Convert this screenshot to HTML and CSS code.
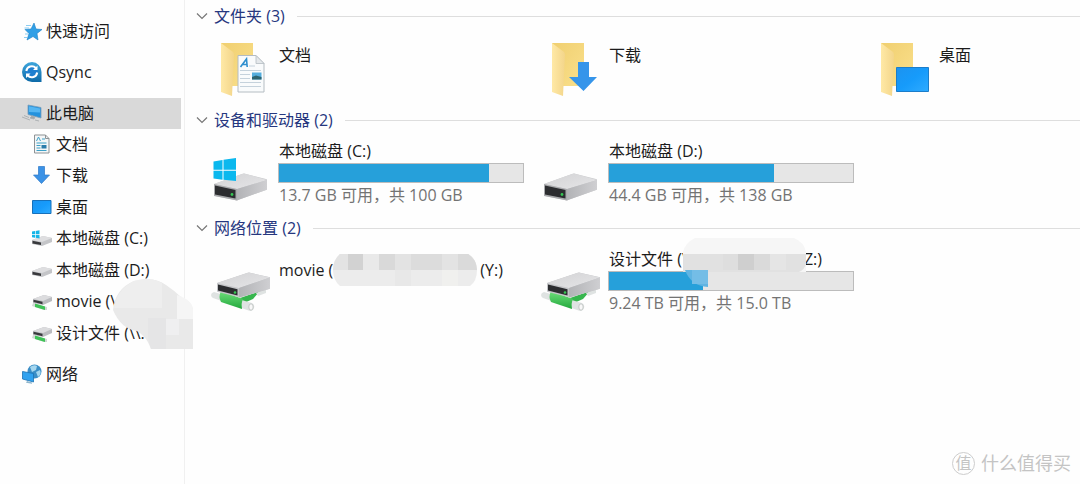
FILE: index.html
```html
<!DOCTYPE html>
<html lang="zh-CN">
<head>
<meta charset="utf-8">
<meta name="viewport" content="width=device-width, initial-scale=1">
<title>此电脑</title>
<link rel="stylesheet" href="styles.css">
</head>
<body>
<svg class="defs" aria-hidden="true">
  <defs>
    <linearGradient id="g-top" x1="0" y1="0" x2="1" y2="1"><stop offset="0" stop-color="#d2d2d4"/><stop offset="1" stop-color="#e6e6e8"/></linearGradient>
    <linearGradient id="g-side" x1="0" y1="0" x2="1" y2="0"><stop offset="0" stop-color="#b2b3b6"/><stop offset="1" stop-color="#cfcfd2"/></linearGradient>
    <linearGradient id="g-back" x1="0" y1="0" x2="1" y2="1"><stop offset="0" stop-color="#f0cf70"/><stop offset="1" stop-color="#fae08c"/></linearGradient>
    <linearGradient id="g-flap" x1="0" y1="0" x2="1" y2="0"><stop offset="0" stop-color="#ffe9a6"/><stop offset="1" stop-color="#f3d58a"/></linearGradient>
    <linearGradient id="g-screen" x1="0" y1="0" x2="1" y2="1"><stop offset="0" stop-color="#1c93f0"/><stop offset=".5" stop-color="#169bfb"/><stop offset="1" stop-color="#2fabff"/></linearGradient>
    <linearGradient id="g-green" x1="0" y1="0" x2="0" y2="1"><stop offset="0" stop-color="#6fe07c"/><stop offset="1" stop-color="#23a83c"/></linearGradient>
    <linearGradient id="g-q" x1="0" y1="0" x2="0" y2="1"><stop offset="0" stop-color="#3fa6dc"/><stop offset="1" stop-color="#0d6aa8"/></linearGradient>
    <g id="folder">
      <path d="M11 7h32v43H11z" fill="url(#g-back)"/>
      <path d="M11 7l12 9q1 1 1 3l-2 41-11-4z" fill="url(#g-flap)"/>
    </g>
    <g id="drive">
      <path d="M4 34L32 24q2-1 4 0l20 5q1 0 1 1v9q0 1-1 1L28 50q-1 1-3 0L5 46q-1 0-1-1z" fill="#c9cacc"/>
      <path d="M4 34L32 24q2-1 4 0l21 6-30 9z" fill="url(#g-top)"/>
      <path d="M27 39l30-9v9q0 1-1 1L28 50l-1 .5z" fill="url(#g-side)"/>
      <path d="M4 34l23 5v11.500L4 46z" fill="#a9aaad"/>
      <path d="M5 35.500l20.500 4.500v8.500L5 44.500z" fill="#2c2d30"/>
      <circle cx="22" cy="44.500" r="1.400" fill="#35c653"/>
    </g>
    <g id="netdrive">
      <path d="M30 42l20-7-7 8-9 4z" fill="#36b64d"/>
      <path d="M46 37l10-4v4l-8 3z" fill="#dfe3e2"/>
      <path d="M4 36l38 11q3 2 2 5-1 3-4 3L3 42q-2-1-2-3t3-3z" fill="#dfe3e2"/>
      <path d="M11 35l22 8q-2 4-1 10L11 46q-3-5 0-11z" fill="url(#g-green)"/>
      <ellipse cx="41" cy="51" rx="2.200" ry="3.200" fill="#f8f8f8" stroke="#b8bcbb" stroke-width=".8"/>
      <path d="M7 27l30-10q2-1 4 0l18 4q1 0 1 1v10q0 1-1 1L31 41q-1 1-3 0L8 36q-1 0-1-1z" fill="#c4c5c8"/>
      <path d="M7 27l30-10q2-1 4 0l19 4.500L29 32z" fill="url(#g-top)"/>
      <path d="M29 32l31-10.500V32q0 1-1 1L31 41l-2 .5z" fill="url(#g-side)"/>
      <path d="M8 28.500l19.500 4.800v6.200L8 34.500z" fill="#2c2d30"/>
      <circle cx="25" cy="36.500" r="1.300" fill="#35c653"/>
    </g>
    <g id="winlogo">
      <path d="M3.500 11.500l9-1.500v9.700h-9zM13.500 9.800L26 8v11.700H13.500zM3.500 20.700h9v9l-9-1.200zM13.500 20.700H26V31l-12.500-1.300z" fill="#0bb8ee"/>
    </g>
    <g id="s-drive">
      <path d="M0 11l11-4 9 2v4l-10 4-10-2z" fill="#c4c5c8"/>
      <path d="M0 11l11-4 9 2-10 4z" fill="#dedee0"/>
      <path d="M.5 11.700l8.500 1.800v2.500L.5 14.500z" fill="#38393c"/>
    </g>
    <g id="s-net">
      <path d="M1 12l14 4v3l-3 0L0 15z" fill="#cfd8d3"/>
      <path d="M3 12.500l10 3v3.500l-10-3z" fill="#3fc257"/>
      <path d="M1 8l11-4 8 2v4l-9 4-10-2z" fill="#bbbcc0"/>
      <path d="M1 8l11-4 8 2-9 4z" fill="#dcdcde"/>
      <path d="M1.500 8.700L10.500 10.700v2.500L1.500 11z" fill="#38393c"/>
    </g>
  </defs>
</svg>

<div class="explorer">
  <nav class="sidebar" aria-label="导航窗格">
    <ul class="nav">
      <li><a class="nav-item" href="#quick">
        <svg class="nav-icon" viewBox="0 0 20 20"><path d="M12 2l2 6 6 .5-5 4 1 6.500-5-3.500L5 19l2-6.500-4-4L9 8z" fill="#2f9fe6" stroke="#1b7fc6" stroke-width=".6"/><path d="M4 4.500h5M2.500 7H7M3 13h3M2 16.500h3" stroke="#8ccdf2" stroke-width="1"/></svg>
        快速访问</a></li>
      <li><a class="nav-item" href="#qsync">
        <svg class="nav-icon" viewBox="0 0 20 20"><path d="M10 0a9.800 9.800 0 1 0 0 20h9.500V10A10 10 0 0 0 10 0z" fill="url(#g-q)"/><circle cx="9.700" cy="9.700" r="6.300" fill="#1e7fd0"/><path d="M4.300 9a5.500 5.500 0 0 1 9.500-3M15.200 10.500a5.500 5.500 0 0 1-9.500 3" fill="none" stroke="#fff" stroke-width="2"/><path d="M15.500 3.500V8H11zM4 16v-4.500h4.500z" fill="#fff"/></svg>
        Qsync</a></li>
      <li><a class="nav-item is-selected" href="#pc" aria-current="page">
        <svg class="nav-icon" viewBox="0 0 20 20"><path d="M6 2l13 2.500V15L6 11.500z" fill="#2492dd" stroke="#7a9db8" stroke-width=".8"/><path d="M7 3.200l11 2.200v4L7 9z" fill="#55b6f2"/><path d="M10 13l3 1-1 2-4-1zM0 14l8 3M2 12.500l5 2M13 17l4 1" fill="#9fa8ad" stroke="#a8adb0" stroke-width=".9"/></svg>
        此电脑</a>
        <ul class="subnav">
          <li><a class="nav-item" href="#docs">
            <svg class="nav-icon" viewBox="0 0 20 20"><path d="M2.500 1h11l3.500 3.500V19H2.500z" fill="#f4f6f7" stroke="#8d9295"/><path d="M13.500 1v3.500H17" fill="none" stroke="#8d9295"/><path d="M4.500 7l2-4 2 4M10 5h3M4.500 9h10M4.500 11.500h4M4.500 14h4M4.500 16.500h10" fill="none" stroke="#3ba0c8"/><path d="M9.500 11h5v3.500h-5z" fill="#2b7cab"/></svg>
            文档</a></li>
          <li><a class="nav-item" href="#downloads">
            <svg class="nav-icon" viewBox="0 0 20 20"><path d="M6.500 1.500h6V10h5L9.500 18.500 1.500 10h5z" fill="#3b92e6" stroke="#2b78c8" stroke-width=".7"/></svg>
            下载</a></li>
          <li><a class="nav-item" href="#desktop">
            <svg class="nav-icon" viewBox="0 0 20 20"><path d="M.5 3.500h18.500v13H.5z" fill="url(#g-screen)" stroke="#1670ba"/></svg>
            桌面</a></li>
          <li><a class="nav-item" href="#c">
            <svg class="nav-icon" viewBox="0 0 20 20"><use href="#s-drive" y="1"/><path d="M0 3.500l3-.5v3H0zM3.700 2.900L7.500 2.300V6H3.700zM0 6.700h3v3L0 9.200zM3.700 6.700h3.800v3.700l-3.800-.6z" fill="#14b5e8"/></svg>
            本地磁盘 (C:)</a></li>
          <li><a class="nav-item" href="#d">
            <svg class="nav-icon" viewBox="0 0 20 20"><use href="#s-drive"/></svg>
            本地磁盘 (D:)</a></li>
          <li><a class="nav-item" href="#y">
            <svg class="nav-icon" viewBox="0 0 20 20"><use href="#s-net"/></svg>
            movie (\</a></li>
          <li><a class="nav-item" href="#z">
            <svg class="nav-icon" viewBox="0 0 20 20"><use href="#s-net"/></svg>
            设计文件 (\\.</a>
            <svg class="mask mask-nav" viewBox="0 0 81 70" aria-hidden="true">
              <path d="M1 31Q3 10 22 2 42-3 54 6q9 6 16 13 9 3 11 11v40H39q-4-12-14-18Q9 50 1 31z" fill="#e9e9e9"/>
              <path d="M22 2Q38-3 50 4v25H2Q5 10 22 2z" fill="#eeeeee"/>
              <path d="M36 39h18v31H39q-3-10-3-13z" fill="#e5e5e6"/>
              <path d="M54 40h13v16H54z" fill="#efeff0"/>
              <path d="M65 16q15 5 16 14v10H65z" fill="#f5f5f5"/>
            </svg></li>
        </ul></li>
      <li><a class="nav-item" href="#network">
        <svg class="nav-icon" viewBox="0 0 20 20"><circle cx="12.500" cy="7.500" r="7" fill="#3b8ec6"/><path d="M8 3q4-3 7-1l-1 4-4 2zM14 8l4-2q2 4-2 7z" fill="#a5d6ee"/><path d="M.5 7.500l11 2v8.500L.5 15z" fill="#31a2ef" stroke="#1c72b4" stroke-width=".8"/><path d="M5 17l5 1.500v1.300l-6-1z" fill="#8fb6cd"/></svg>
        网络</a></li>
    </ul>
  </nav>

  <main class="content">
    <section class="group">
      <h2 class="group-head"><button class="toggle" type="button" aria-expanded="true"><svg class="chevron" viewBox="0 0 12 8"><path d="M1 1.500l5 5 5-5"/></svg>文件夹 (3)</button></h2>
      <div class="tiles tiles-folders">
        <article class="tile">
          <svg class="tile-icon" viewBox="0 -1 62 68"><use href="#folder"/><path d="M28 19.500h18l8 8V56H28z" fill="#f9fbfc" stroke="#b4bcc2"/><path d="M46 19.500v8h8z" fill="#e4e8eb" stroke="#b4bcc2" stroke-width=".8"/><path d="M30.500 31l6-8 .7 8M33 28.500h4" fill="none" stroke="#2f8fce" stroke-width="1.600"/><path d="M39 30h6M30 34.500h21M30 38.500h10M30 42.500h10M30 46.500h21M30 50.500h21" stroke="#c5d2dc"/><path d="M42 36.500h9.500v7H42z" fill="#55aede"/><path d="M42 41l4-1.500 5.500 1.500v2.500H42z" fill="#2d6470"/></svg>
          <h3 class="tile-title">文档</h3>
        </article>
        <article class="tile">
          <svg class="tile-icon" viewBox="0 -1 62 68"><use href="#folder" x="1"/><path d="M38 26h11v15h8L43.500 55 29 41h9z" fill="#3695ea"/></svg>
          <h3 class="tile-title">下载</h3>
        </article>
        <article class="tile">
          <svg class="tile-icon" viewBox="0 -1 62 68"><use href="#folder"/><path d="M26.500 31.500h32v24h-32z" fill="url(#g-screen)" stroke="#1b7dca"/></svg>
          <h3 class="tile-title">桌面</h3>
        </article>
      </div>
    </section>

    <section class="group">
      <h2 class="group-head"><button class="toggle" type="button" aria-expanded="true"><svg class="chevron" viewBox="0 0 12 8"><path d="M1 1.500l5 5 5-5"/></svg>设备和驱动器 (2)</button></h2>
      <div class="tiles">
        <article class="tile">
          <svg class="tile-icon" viewBox="0 -11 62 68"><use href="#drive"/><use href="#winlogo"/></svg>
          <div class="tile-body">
            <h3 class="tile-title" id="vol-c">本地磁盘 (C:)</h3>
            <progress class="usage" max="100" value="86.2" aria-labelledby="vol-c"></progress>
            <p class="tile-note">13.7 GB 可用，共 100 GB</p>
          </div>
        </article>
        <article class="tile">
          <svg class="tile-icon" viewBox="0 -11 62 68"><use href="#drive"/></svg>
          <div class="tile-body">
            <h3 class="tile-title" id="vol-d">本地磁盘 (D:)</h3>
            <progress class="usage" max="138" value="93.6" aria-labelledby="vol-d"></progress>
            <p class="tile-note">44.4 GB 可用，共 138 GB</p>
          </div>
        </article>
      </div>
    </section>

    <section class="group">
      <h2 class="group-head"><button class="toggle" type="button" aria-expanded="true"><svg class="chevron" viewBox="0 0 12 8"><path d="M1 1.500l5 5 5-5"/></svg>网络位置 (2)</button></h2>
      <div class="tiles">
        <article class="tile tile-middle">
          <svg class="tile-icon" viewBox="0 -9 62 68"><use href="#netdrive"/></svg>
          <h3 class="tile-title title-masked">movie (<svg class="mask-inline" viewBox="0 0 144 32" aria-hidden="true">
            <path d="M7 0h128q9 6 9 16 0 11-7 16H7Q0 26 0 16 0 6 7 0z" fill="#ececec"/>
            <path d="M7 0h128q6 3 8 10v6H0Q0 6 7 0z" fill="#e3e3e3"/>
            <path d="M15 0h15v16H15z" fill="#d2d2d2"/><path d="M30 0h16v16H30z" fill="#e9e9e9"/><path d="M46 0h16v16H46z" fill="#d9d9d9"/><path d="M78 0h31v16H78z" fill="#dcdcdc"/><path d="M125 0h10q9 6 9 16h-19z" fill="#dadada"/><path d="M109 16h16v16h-16z" fill="#f0f0ee"/><path d="M62 16h16v16H62z" fill="#e8e8e8"/>
          </svg>(Y:)</h3>
        </article>
        <article class="tile">
          <svg class="tile-icon" viewBox="0 -9 62 68"><use href="#netdrive"/></svg>
          <div class="tile-body">
            <h3 class="tile-title title-split" id="vol-z"><span>设计文件 (\</span><span>Z:)</span></h3>
            <progress class="usage" max="15" value="5.8" aria-labelledby="vol-z"></progress>
            <p class="tile-note">9.24 TB 可用，共 15.0 TB</p>
            <svg class="mask mask-title" viewBox="0 0 123 49" aria-hidden="true">
              <path d="M12 0h99q10 4 12 14v20H0V14Q2 5 12 0z" fill="#f6f6f6"/>
              <path d="M0 16h123v10q-1 5-7 8H0z" fill="#e1e1e1"/>
              <path d="M40 16h15v16H40z" fill="#dedede"/><path d="M55 16h16v16H55z" fill="#cfcfcf"/><path d="M71 16h16v16H71z" fill="#dadada"/><path d="M87 16h16v16H87z" fill="#e5e5e5"/>
              <path d="M2 32h23v17Q8 48 2 32z" fill="#60b4e2"/><path d="M9 32h16v14H9z" fill="#74bde6"/>
            </svg>
          </div>
        </article>
      </div>
    </section>
  </main>

  <div class="watermark"><span class="watermark-logo">值</span>什么值得买</div>
</div>
</body>
</html>
```
FILE: styles.css
```css
* {
  box-sizing: border-box;
}

body {
  margin: 0;
  background: #fefefe;
  color: #1c1c1c;
  font: 16px/24px "Open Sans", "Noto Sans CJK SC", sans-serif;
}

h2, h3, p, ul {
  margin: 0;
  padding: 0;
  font-size: inherit;
  font-weight: 400;
  list-style: none;
}

.defs {
  position: absolute;
  width: 0;
  height: 0;
}

.explorer {
  position: relative;
  display: grid;
  grid-template-columns: 185px 1fr;
  min-height: 100vh;
}

/* Navigation pane */
.sidebar {
  padding: 16px 3px 16px 0;
  border-right: 1px solid #f0f0f0;
}

.nav {
  display: flex;
  flex-direction: column;
  gap: 10px;
}

.nav-item {
  display: flex;
  align-items: center;
  gap: 4px;
  height: 31px;
  padding: 0 0 2px 22px;
  color: inherit;
  text-decoration: none;
  white-space: nowrap;
}

.nav-item.is-selected {
  background: #d9d9d9;
}

.nav-icon {
  flex: none;
  width: 20px;
  height: 20px;
}

.subnav {
  display: flex;
  flex-direction: column;
  justify-content: space-between;
  min-height: 220px;
}

.subnav li {
  position: relative;
}

.subnav .nav-item {
  padding-left: 32px;
}

.mask {
  position: absolute;
}

.mask-nav {
  left: 112px;
  bottom: 0;
  width: 81px;
  height: 70px;
}

/* Content pane */
.content {
  padding: 4px 0 16px 11px;
}

.group {
  margin-bottom: 9px;
}

.group-head {
  display: flex;
  align-items: center;
  gap: 12px;
  margin-bottom: 7px;
}

.group-head::after {
  content: "";
  flex: 1;
  height: 1px;
  background: #dedede;
}

.toggle {
  display: flex;
  align-items: center;
  gap: 6px;
  padding: 0;
  border: 0;
  background: none;
  color: #26377f;
  font: inherit;
}

.chevron {
  width: 12px;
  height: 8px;
  fill: none;
  stroke: #777;
  stroke-width: 1.2;
}

.tiles {
  display: grid;
  grid-template-columns: 330px 330px 1fr;
  padding-left: 14px;
}

.tile {
  display: flex;
  gap: 6px;
  min-height: 68px;
}

.tiles-folders .tile {
  height: 64px;
  min-height: 0;
}

.tiles-folders .tile-title {
  padding-top: 8px;
}

.tile-icon {
  flex: none;
  width: 62px;
  height: 68px;
}

.tile-body {
  position: relative;
  width: 246px;
}

.tile-title,
.tile-note {
  padding-left: 1px;
  white-space: nowrap;
}

.tile-middle {
  align-items: flex-start;
}

.title-masked {
  display: flex;
  align-items: center;
  padding-top: 7px;
}

.mask-inline {
  width: 144px;
  height: 32px;
  margin-right: 3px;
}

.title-split {
  display: flex;
  justify-content: space-between;
  padding-right: 32px;
}

.mask-title {
  top: -9px;
  left: 75px;
  width: 123px;
  height: 49px;
}

.usage {
  display: block;
  width: 100%;
  height: 20px;
  border: 1px solid #bcbcbc;
  background: #e6e6e6;
  appearance: none;
}

.usage::-webkit-progress-bar {
  background: #e6e6e6;
}

.usage::-webkit-progress-value {
  background: #26a0da;
}

.tile-note {
  color: #737373;
}

.watermark {
  position: absolute;
  right: 9px;
  bottom: 9px;
  display: flex;
  align-items: center;
  gap: 6px;
  color: #c4c4c4;
  font-size: 18px;
}

.watermark-logo {
  width: 23px;
  height: 23px;
  border: 1px solid #cdcdcd;
  border-radius: 50%;
  font-size: 16px;
  line-height: 20px;
  text-align: center;
}
```
